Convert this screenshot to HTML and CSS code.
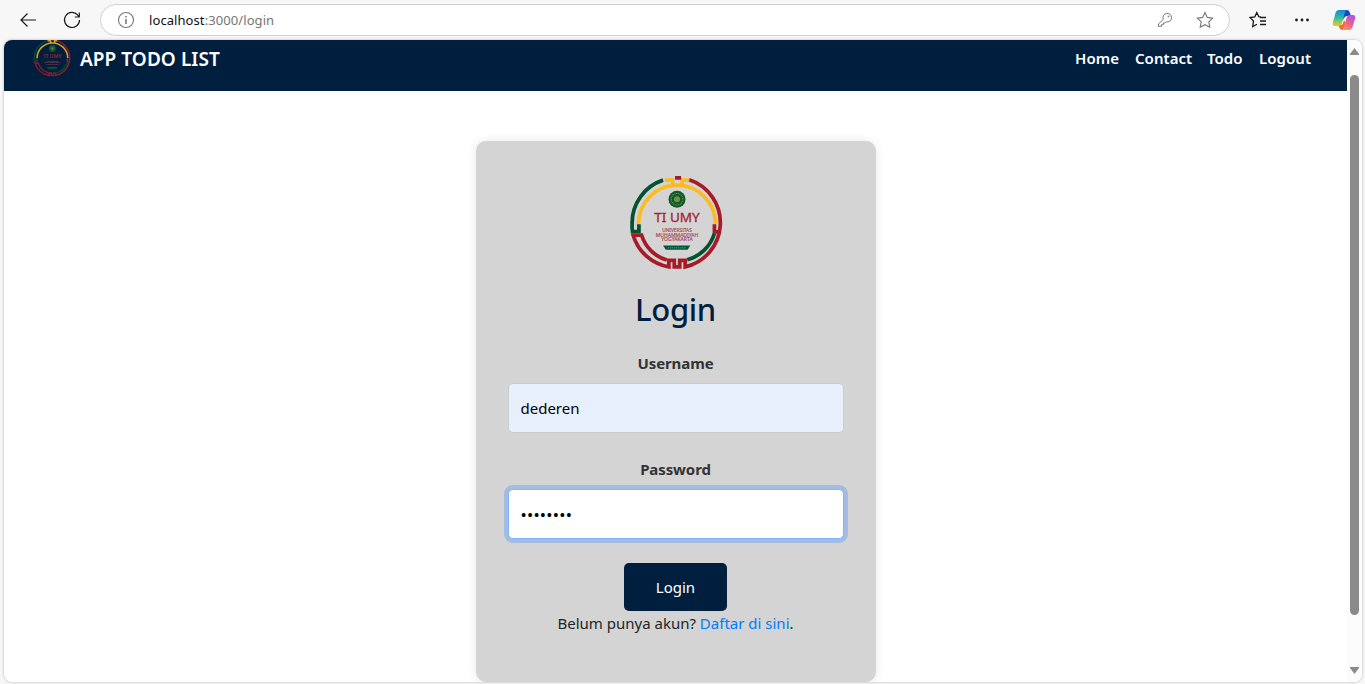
FILE: index.html
```
<!DOCTYPE html>
<html lang="id">
<head>
<meta charset="utf-8">
<title>Login</title>
<link rel="stylesheet" href="styles.css">
</head>
<body>
<svg class="defs" width="0" height="0">
  <defs>
    <symbol id="crest" viewBox="20 26 294 294">
      <g fill="none" stroke-width="11">
        <path stroke="#04522f" d="M129 47A132 132 0 0 0 38 173Q37 186 39 198H58V177"/>
        <path stroke="#fdbb22" d="M57 175A113 113 0 0 1 283 175M134 47H157V62M207 47H185V62"/>
        <path stroke="#a51c28" d="M164 40H182M206 46A133 133 0 0 1 194 302V283H178V302H162V283H146V302A133 133 0 0 1 41 209H66A110 110 0 0 0 140 282M299 199H280V177"/>
        <path stroke="#04522f" d="M280 204A114 114 0 0 1 200 281"/>
      </g>
      <circle cx="170" cy="103" r="25" fill="#0d5a2d"/>
      <circle cx="170" cy="103" r="17" fill="none" stroke="#79983f" stroke-width="3" stroke-dasharray="3 2"/>
      <circle cx="170" cy="103" r="9" fill="#6f9240"/>
      <g class="crest-text" text-anchor="middle" fill="#a5232f">
        <text x="170" y="171" font-size="38" stroke="#a5232f" stroke-width=".8" textLength="134" lengthAdjust="spacingAndGlyphs">TI UMY</text>
        <g font-size="13" fill="#a34652" stroke="#a34652" stroke-width=".4">
          <text x="170" y="199" textLength="87" lengthAdjust="spacingAndGlyphs">UNIVERSITAS</text>
          <text x="170" y="213" textLength="125" lengthAdjust="spacingAndGlyphs">MUHAMMADIYAH</text>
          <text x="170" y="227" textLength="92" lengthAdjust="spacingAndGlyphs">YOGYAKARTA</text>
        </g>
      </g>
      <path fill="#04573a" d="M129 239H209L201 252H137Z"/>
      <path stroke="#7fac97" stroke-width="2" stroke-dasharray="4 2" d="M143 246H197"/>
    </symbol>
  </defs>
</svg>
<div class="toolbar">
  <svg class="nav-icon" viewBox="0 0 20 20"><path d="M18 10H3M9.500 3.500L3 10L9.500 16.500"/></svg>
  <svg class="nav-icon" viewBox="0 0 20 20"><path d="M17.500 10A7.500 7.500 0 1 1 15.800 5.200L17 6.800M17.300 2.500V7H12.800"/></svg>
  <div class="address">
    <svg class="gray-icon" viewBox="0 0 20 20"><circle cx="10" cy="10" r="7.500"/><path d="M10 9V14M10 6V7.500" stroke-width="1.500"/></svg>
    <span class="url"><b>localhost</b>:3000/login</span>
    <svg class="gray-icon key" viewBox="0 0 20 20"><path d="M8.300 9.300A4.300 4.300 0 1 1 11.200 11.800L9.800 13H8.300V14.700H6.600V16.300H3.500V13.900L8.300 9.300Z"/><circle cx="13.500" cy="6.500" r=".5"/></svg>
    <svg class="gray-icon star" viewBox="0 0 20 20"><path d="M10 2.500L12.300 7.400L17.700 8.100L13.800 11.900L14.800 17.300L10 14.700L5.200 17.300L6.200 11.900L2.300 8.100L7.700 7.400Z"/></svg>
  </div>
  <svg class="nav-icon fav" viewBox="0 0 20 20"><path d="M13 7L10.800 6.700L8.800 2.500L6.800 6.800L2 7.500L5.500 11L4.700 16.500L9 14.200M12 7.500H18M12 11H18M12 14.500H18"/></svg>
  <svg class="nav-icon more" viewBox="0 0 20 20"><circle cx="4.500" cy="10" r="1.400"/><circle cx="10" cy="10" r="1.400"/><circle cx="15.500" cy="10" r="1.400"/></svg>
  <svg class="copilot" viewBox="0 0 24 24">
    <defs>
      <linearGradient id="cool" x1="0" y1="0" x2="0" y2="1"><stop offset="0" stop-color="#1685dd"/><stop offset=".45" stop-color="#2cb6ae"/><stop offset=".8" stop-color="#a4cc45"/><stop offset="1" stop-color="#f1c51b"/></linearGradient>
      <linearGradient id="warm" x1=".8" y1="0" x2=".2" y2="1"><stop offset="0" stop-color="#a558e8"/><stop offset=".5" stop-color="#ed5c94"/><stop offset="1" stop-color="#ff9a57"/></linearGradient>
    </defs>
    <path fill="#1749bd" d="M10 2H15Q17 2 18 5L19 8H15Q12.500 8 11.500 12Z"/>
    <path fill="#f36b35" d="M6 17H9Q11 17 12 12L14 16L12 22H10Q8 22 7 19Z"/>
    <path fill="url(#cool)" d="M7 2H15Q13.500 2 12.700 5L10 15Q9.300 18 6 18H3Q0 18 1 14L3.500 5Q4.500 2 7 2Z"/>
    <path fill="url(#warm)" d="M18 7H21Q24 7 23 11L20.500 19Q19.500 22 17 22H9Q11 22 11.800 19L14.500 10Q15.300 7 18 7Z"/>
  </svg>
</div>
<div class="window">
  <div class="page">
    <header class="header">
      <svg class="header-logo"><use href="#crest"/></svg>
      <span class="brand">APP TODO LIST</span>
      <nav class="links"><a class="l-home">Home</a><a class="l-contact">Contact</a><a class="l-todo">Todo</a><a class="l-logout">Logout</a></nav>
    </header>
    <form class="card">
      <svg class="card-logo"><use href="#crest"/></svg>
      <h2 class="title">Login</h2>
      <label class="label">Username</label>
      <input class="field filled" type="text" value="dederen">
      <label class="label">Password</label>
      <input class="field focused" type="text" value="••••••••">
      <button class="submit" type="button">Login</button>
      <p class="signup">Belum punya akun? <a>Daftar di sini</a>.</p>
    </form>
  </div>
  <div class="scrollbar">
    <svg class="arrow" viewBox="0 0 9 7"><path d="M4.500 0L9 6V7H0V6Z"/></svg>
    <div class="thumb"></div>
    <svg class="arrow" viewBox="0 0 9 7"><path d="M4.500 7L9 1V0H0V1Z"/></svg>
  </div>
</div>
</body>
</html>
```
FILE: styles.css
```
* { box-sizing: border-box; }
body {
  margin: 0;
  height: 684px;
  overflow: hidden;
  background: #f7f7f7;
  font-family: "Noto Sans", "Open Sans", sans-serif;
  font-size: 15px;
  color: #212529;
}
.defs { position: absolute; }
.crest-text { font-family: "Noto Sans", sans-serif; }

/* Browser toolbar */
.toolbar { display: flex; align-items: center; height: 40px; padding-left: 18px; }
.nav-icon { width: 20px; height: 20px; margin-right: 24px; fill: none; stroke: #1b1b1b; stroke-width: 1.2; }
.address {
  display: flex;
  align-items: center;
  width: 1130px;
  height: 32px;
  margin-left: -6px;
  padding: 0 14px 0 15px;
  border: 1px solid #d1d1d1;
  border-radius: 16px;
  background: #fff;
}
.gray-icon { width: 20px; height: 20px; fill: none; stroke: #767676; stroke-width: 1.1; }
.key { stroke-width: 1; }
.star { margin-left: 20px; }
.url { flex: 1; margin-left: 13px; font-size: 13px; letter-spacing: .08px; color: #767676; }
.url b { font-weight: 400; color: #111; }
.fav { margin: 0 24px 0 18px; stroke-width: 1.3; }
.more { margin-right: 20px; fill: #1b1b1b; stroke: none; }
.copilot { width: 24px; height: 24px; }

/* Page frame */
.window {
  display: flex;
  width: 1358px;
  height: 642px;
  margin-left: 4px;
  overflow: hidden;
  border-radius: 8px;
  background: #fff;
  box-shadow: 0 0 2px 1px #d4d4d4;
}
.page { width: 1343px; }
.header {
  display: flex;
  align-items: center;
  height: 51px;
  padding: 0 36px 14px 28px;
  background: #001f3f;
  color: #fff;
  font-weight: 600;
}
.header-logo { flex: none; width: 40px; height: 40px; margin-top: -1px; opacity: .85; }
.brand { margin-left: 8px; font-size: 19px; letter-spacing: .07px; }
.links { display: flex; gap: 16px; margin: 0 0 2px auto; font-size: 15px; letter-spacing: .05px; }
.l-home { width: 44px; }
.l-contact { width: 56px; }
.l-todo { width: 36px; }
.l-logout { width: 52px; }

/* Login card */
.card {
  display: flex;
  flex-direction: column;
  align-items: center;
  width: 400px;
  height: 541px;
  margin: 50px auto 0;
  padding: 32px;
  border-radius: 10px;
  background: #d4d4d4;
  box-shadow: 0 0 10px rgba(0, 0, 0, .1);
}
.card-logo { width: 100px; height: 100px; flex: none; }
.title { margin: 17px 0 22px; font-size: 31px; line-height: 38px; letter-spacing: -.3px; font-weight: 500; color: #001f3f; }
.label { height: 24px; line-height: 24px; margin: 1px 0 8px; font-weight: 700; color: #333; letter-spacing: -.1px; }
.field {
  width: 336px;
  height: 50px;
  flex: none;
  padding: 0 12px;
  border: 1px solid #ccc;
  border-radius: 5px;
  outline: none;
  font: inherit;
  background: #fff;
}
.filled { margin-bottom: 23px; background: #e8f0fe; color: #000; }
.focused { border-color: #80b4ff; box-shadow: 0 0 0 4px #a3bce2; font-size: 16.5px; letter-spacing: .25px; }
.submit {
  width: 103px;
  height: 48px;
  flex: none;
  margin-top: 24px;
  border: 0;
  border-radius: 5px;
  background: #001f3f;
  color: #fff;
  font: inherit;
}
.signup { margin: 0; line-height: 24px; white-space: nowrap; }
.signup a { color: #007bff; }

/* Scrollbar */
.scrollbar { display: flex; flex-direction: column; align-items: center; width: 15px; padding: 8px 0; background: #fcfcfc; }
.arrow { width: 9px; height: 7px; fill: #8a8a8a; }
.thumb { width: 9px; height: 540px; margin: 20px 0 auto; border-radius: 5px; background: #8a8a8a; }
```
